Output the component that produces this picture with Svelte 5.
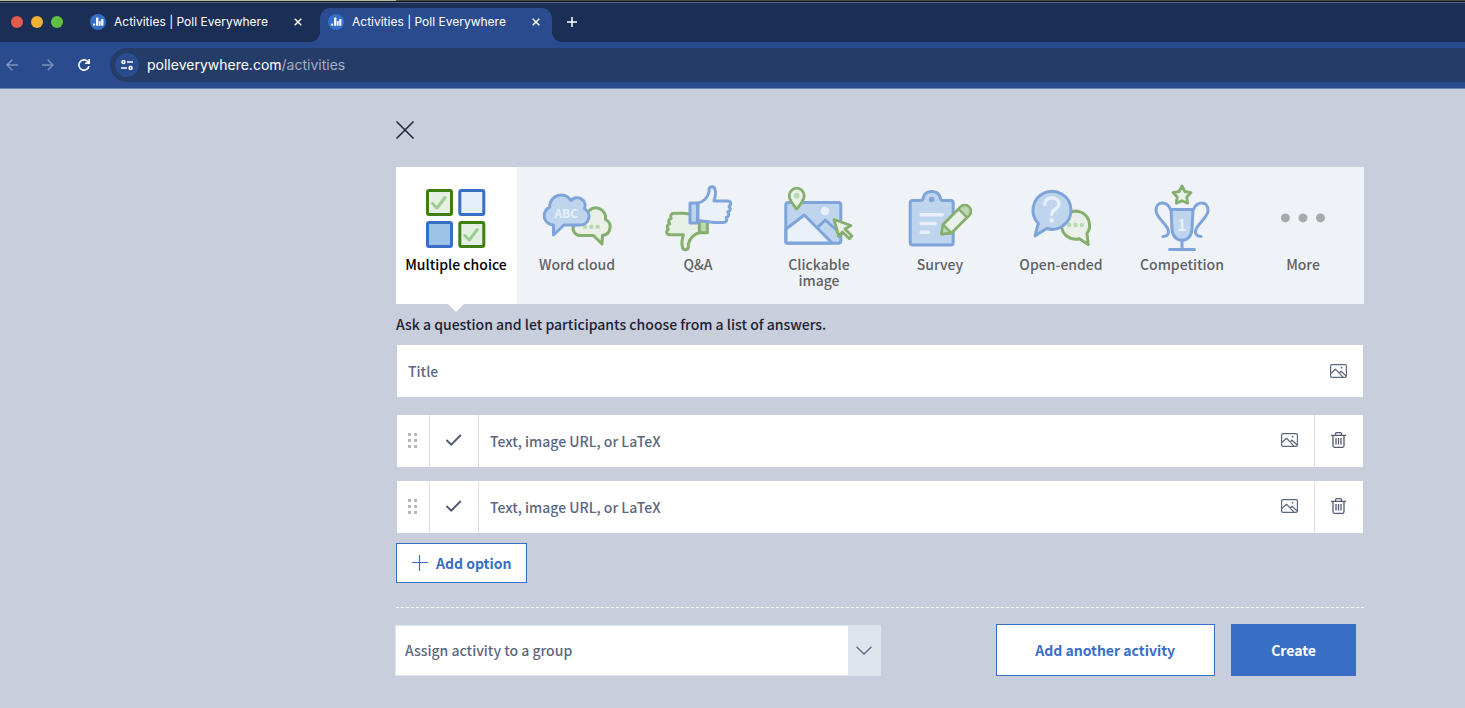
<script lang="ts">
    type Kind = { id: string; label: string };

    const kinds: Kind[] = [
        { id: "choice", label: "Multiple choice" },
        { id: "cloud", label: "Word cloud" },
        { id: "qa", label: "Q&A" },
        { id: "image", label: "Clickable image" },
        { id: "survey", label: "Survey" },
        { id: "open", label: "Open-ended" },
        { id: "competition", label: "Competition" },
        { id: "more", label: "More" },
    ];

    let selected = $state("choice");
    let title = $state("");
    let group = $state("");
    let options = $state([
        { id: 1, text: "" },
        { id: 2, text: "" },
    ]);
    let nextId = 3;

    function addOption() {
        options.push({ id: nextId++, text: "" });
    }

    function removeOption(id: number) {
        options = options.filter((o) => o.id !== id);
    }
</script>

{#snippet favicon()}
    <svg width="16" height="16" viewBox="0 0 16 16" aria-hidden="true">
        <circle cx="8" cy="8" r="8" fill="#3570c8" />
        <rect x="3" y="9.5" width="2.2" height="2.2" rx="1" fill="#fff" />
        <rect x="6" y="3.5" width="2.4" height="8.2" rx=".6" fill="#fff" />
        <rect x="9" y="7" width="1.6" height="4.7" rx=".5" fill="#fff" />
        <rect x="11.2" y="5" width="2.2" height="6.7" rx=".6" fill="#fff" />
    </svg>
{/snippet}

{#snippet smallCross()}
    <svg width="8" height="8" viewBox="0 0 8 8" aria-hidden="true">
        <path d="M.7 .7 7.3 7.3M7.3 .7 .7 7.3" stroke="#fff" stroke-width="1.5" />
    </svg>
{/snippet}

{#snippet pictureIcon()}
    <svg width="17" height="14" viewBox="0 0 17 14" fill="none" stroke="#5b6880" stroke-width="1.2" stroke-linejoin="round" aria-hidden="true">
        <rect x=".6" y=".6" width="15.8" height="12.8" rx="1.4" />
        <path d="M.8 9.5 5.5 5.2 13 13.2M9 9 11 7.2 16.2 12" />
        <circle cx="11.6" cy="3.7" r=".9" fill="#5b6880" stroke="none" />
    </svg>
{/snippet}

{#snippet kindIcon(id: string)}
    <svg class="kind-icon" width="73" height="72" viewBox="0 0 73 72" fill="none" stroke-width="3" stroke-linecap="round" stroke-linejoin="round" aria-hidden="true">
        {#if id === "choice"}
            <rect x="7.5" y="8.5" width="24" height="24" rx="1.5" fill="#e4f0e2" stroke="#3f7f12" />
            <rect x="39.8" y="8.5" width="24" height="24" rx="1.5" fill="#e5effa" stroke="#386fc4" />
            <rect x="7.5" y="40.5" width="24" height="24" rx="1.5" fill="#9dc2e7" stroke="#386fc4" />
            <rect x="39.8" y="40.5" width="24" height="24" rx="1.5" fill="#e4f0e2" stroke="#3f7f12" />
            <path d="M12.5 21.5 17 26 25 15.5M44.8 53.5 49.3 58 57.3 47.5" stroke="#9fcb95" />
        {:else if id === "cloud"}
            <path d="M46 31.5A9.8 9.8 0 0 1 64.5 37.5A8.5 8.5 0 0 1 61.5 53.5L61 62 52.5 53.5H39A7 7 0 0 1 32.5 44Z" class="g" />
            <circle cx="44" cy="44.7" r="2.2" class="gl" />
            <circle cx="50.3" cy="44.7" r="2.2" class="gl" />
            <circle cx="56.6" cy="44.7" r="2.2" class="gl" />
            <path d="M12.5 43V53L23 43H39A8.7 8.7 0 0 0 43.5 26.7A8 8 0 0 0 30 18.5A11.5 11.5 0 0 0 8.7 25.2A9.3 9.3 0 0 0 12.5 43Z" class="b" />
            <text x="25.3" y="36" font-size="12" class="glyph">ABC</text>
        {:else if id === "qa"}
            <g transform="rotate(180 36.7 35.9)">
                <path d="M36 21C40 20.5 45.5 16.5 47 10V7C47.5 3 52.5 3 53 7C54.5 11 53 15 52 19H65C69 19 70 22 67 24.5C69 26.5 68.5 29 65.7 30C67.5 32 67 34.5 64.3 35.5C65.3 38 64.5 40.5 61 40.5H52L36 38.5Z" class="g" />
                <path d="M28 21H36V41H28Z" class="g gfill" />
            </g>
            <path d="M36 21C40 20.5 45.5 16.5 47 10V7.5C47.5 3.7 52.5 3.7 53 7.5C54.5 11 53 15 52 19H65C69 19 70 22 67 24.5C69 26.5 68.5 29 65.7 30C67.5 32 67 34.5 64.3 35.5C65.3 38 64.5 40.5 61 40.5H52L36 38.5Z" class="b pale" />
            <path d="M28 21H35.5V41H28Z" class="b" />
        {:else if id === "image"}
            <rect x="2.8" y="20.5" width="55" height="40.7" rx="2.5" class="b" />
            <path d="M35.3 44.7 42.3 38 57.8 52" class="b" />
            <path d="M3 47 21.3 33 49 61H3Z" class="b pale" />
            <circle cx="42" cy="29" r="4.3" fill="#e6effa" />
            <path d="M13.7 27C9 21.5 6.2 17.5 6.2 13.7A7.5 7.5 0 0 1 21.2 13.7C21.2 17.5 18.4 21.5 13.7 27Z" class="g" stroke-width="2.8" />
            <circle cx="13.7" cy="13.7" r="3" class="gl" />
            <path d="M51 37.5 68 43.5 62 47 69 54 66.3 56.7 59.5 50 55.8 54.5Z" class="g" stroke-width="2.8" />
        {:else if id === "survey"}
            <path d="M8.7 18.5H17C19.5 18.5 18.8 16.5 19.5 14.8C22 7.8 33.5 7.8 36 14.8C36.7 16.5 36 18.5 38.5 18.5H46.7Q49.2 18.5 49.2 21V60.5Q49.2 63 46.7 63H8.7Q6.2 63 6.2 60.5V21Q6.2 18.5 8.7 18.5Z" class="b" />
            <circle cx="27.7" cy="17.5" r="2.8" fill="#7fa4da" />
            <path d="M17.2 32.7H38.3M17.2 41.5H31.2M17.2 50.3H24.5" stroke="#e6effa" stroke-width="3.6" />
            <path d="M37.5 52 39 42.5 56.5 25A6 6 0 0 1 65 33.5L47.5 51Z" class="g" stroke-width="2.8" />
            <path d="M54.5 27 56.5 25A6 6 0 0 1 65 33.5L63 35.5Z" class="g gfill" stroke-width="2.4" />
            <path d="M37.5 52 39 42.5 47.5 51Z" class="g gfill" stroke-width="2.4" />
        {:else if id === "open"}
            <path d="M62 51.3 63.2 62.5 54.3 56.7A14 14 0 1 1 62 51.3Z" class="g" />
            <circle cx="44.3" cy="43" r="2.2" class="gl" />
            <circle cx="50.6" cy="43" r="2.2" class="gl" />
            <circle cx="56.8" cy="43" r="2.2" class="gl" />
            <path d="M13.3 41.5 10 54 21.5 46.5A19 19 0 1 0 13.3 41.5Z" class="b" />
            <path d="M19.7 22.5C19.7 14 34 14 34 22C34 27.5 26.7 27 26.7 32.5" stroke="#e6effa" stroke-width="3.4" />
            <circle cx="26.7" cy="38.4" r="2.4" fill="#e6effa" />
        {:else if id === "competition"}
            <path d="M36 4 38.9 9.5 45 10.6 40.8 15 41.6 21.2 36 18.7 30.4 21.2 31.2 15 27 10.6 33.1 9.5Z" class="g" stroke-width="2.8" />
            <path d="M24.5 27.5C21 19 10 18.5 10 28.5C10 36 22.5 43 22.5 49.5C22.5 53.5 20 54.5 17 54.5M47.5 27.5C51 19 62 18.5 62 28.5C62 36 49.5 43 49.5 49.5C49.5 53.5 52 54.5 55 54.5M36 59V67.5M23.5 67.5H48.5" stroke="#7fa4da" />
            <path d="M25 27.5H47L46 47C45.5 62 26.5 62 26 47Z" class="b" />
            <text x="35.8" y="49" font-size="16" class="glyph">1</text>
        {:else}
            <circle cx="18.4" cy="35.9" r="4.5" fill="#a7a9ac" />
            <circle cx="36" cy="35.9" r="4.5" fill="#a7a9ac" />
            <circle cx="53.5" cy="35.9" r="4.5" fill="#a7a9ac" />
        {/if}
    </svg>
{/snippet}

<header class="browser">
    <div class="desktop-edge"></div>
    <div class="tab-strip">
        <div class="lights">
            <i class="red"></i>
            <i class="yellow"></i>
            <i class="green"></i>
        </div>
        <div class="tab">
            {@render favicon()}
            <span>Activities | Poll Everywhere</span>
            <button aria-label="Close tab">{@render smallCross()}</button>
        </div>
        <div class="tab current">
            {@render favicon()}
            <span>Activities | Poll Everywhere</span>
            <button aria-label="Close tab">{@render smallCross()}</button>
        </div>
        <button class="new-tab" aria-label="New tab">
            <svg width="10" height="10" viewBox="0 0 10 10">
                <path d="M5 0V10M0 5H10" stroke="#fff" stroke-width="1.5" />
            </svg>
        </button>
    </div>
    <div class="toolbar">
        <button aria-label="Back">
            <svg width="12" height="12" viewBox="0 0 12 12" fill="none" stroke="#7d90bd" stroke-width="1.5">
                <path d="M12 6H1M6.3 .7 1 6 6.3 11.3" />
            </svg>
        </button>
        <button aria-label="Forward">
            <svg width="12" height="12" viewBox="0 0 12 12" fill="none" stroke="#7d90bd" stroke-width="1.5">
                <path d="M0 6H11M5.7 .7 11 6 5.7 11.3" />
            </svg>
        </button>
        <button aria-label="Reload">
            <svg width="12" height="12" viewBox="0 0 12 12" fill="none" stroke="#fff" stroke-width="1.6">
                <path d="M11 7A5.1 5.1 0 1 1 9.8 2.6L11 3.8M11.2 0V4.2H7" />
            </svg>
        </button>
        <div class="address">
            <button class="site-info" aria-label="Site information">
                <svg width="12" height="10" viewBox="0 0 12 10" fill="none" stroke="#fff" stroke-width="1.4">
                    <circle cx="2.4" cy="2" r="1.5" />
                    <path d="M6 2H12M0 8H6" />
                    <circle cx="9.6" cy="8" r="1.5" />
                </svg>
            </button>
            <a href="#activities">polleverywhere.com<span>/activities</span></a>
        </div>
    </div>
</header>

<main>
    <button class="close" aria-label="Close">
        <svg width="18" height="18" viewBox="0 0 18 18">
            <path d="M.5 .5 17.5 17.5M17.5 .5 .5 17.5" stroke="#1c2333" stroke-width="1.5" />
        </svg>
    </button>

    <nav class="kinds">
        {#each kinds as kind (kind.id)}
            <button
                class="kind"
                class:active={selected === kind.id}
                onclick={() => (selected = kind.id)}
            >
                {@render kindIcon(kind.id)}
                <span>{kind.label}</span>
            </button>
        {/each}
    </nav>

    <p class="hint">Ask a question and let participants choose from a list of answers.</p>

    <div class="row title-row">
        <input aria-label="Title" placeholder="Title" bind:value={title} />
        <button class="picture" aria-label="Add image to title">{@render pictureIcon()}</button>
    </div>

    <div class="options">
        {#each options as option (option.id)}
            <div class="row">
                <button class="drag" aria-label="Reorder option">
                    <svg width="10" height="15" viewBox="0 0 10 15" fill="#b4b7bf">
                        <path d="M0 0h3v3H0zM6 0h3v3H6zM0 6h3v3H0zM6 6h3v3H6zM0 12h3v3H0zM6 12h3v3H6z" />
                    </svg>
                </button>
                <button class="cell mark" aria-label="Mark as correct">
                    <svg width="16" height="12" viewBox="0 0 16 12" fill="none" stroke="#4f5b73" stroke-width="2">
                        <path d="M.4 6 5.2 10.6 14.8 1" />
                    </svg>
                </button>
                <input aria-label="Option" placeholder="Text, image URL, or LaTeX" bind:value={option.text} />
                <button class="picture" aria-label="Add image to option">{@render pictureIcon()}</button>
                <button class="cell" aria-label="Delete option" onclick={() => removeOption(option.id)}>
                    <svg width="16" height="16" viewBox="0 0 16 16" fill="none" stroke="#4f5b73" stroke-width="1.3">
                        <path d="M0 3.3H15M4.6 3V1.6Q4.6 .7 5.5 .7H9.5Q10.4 .7 10.4 1.6V3M2 3.5V13.8Q2 15.3 3.5 15.3H11.5Q13 15.3 13 13.8V3.5M5 6V12.5M7.5 6V12.5M10 6V12.5" />
                    </svg>
                </button>
            </div>
        {/each}
    </div>

    <button class="add-option" onclick={addOption}>
        <svg width="16" height="16" viewBox="0 0 16 16">
            <path d="M7.5 0V16M0 7.5H16" stroke="#386fc4" stroke-width="1.2" />
        </svg>
        Add option
    </button>

    <footer>
        <div class="group">
            <select aria-label="Assign activity to a group" bind:value={group}>
                <option value="">Assign activity to a group</option>
            </select>
            <span class="arrow">
                <svg width="17" height="9" viewBox="0 0 17 9" fill="none" stroke="#5b6880" stroke-width="1.3">
                    <path d="M.5 .7 8 8 15.5 .7" />
                </svg>
            </span>
        </div>
        <button class="another">Add another activity</button>
        <button class="create">Create</button>
    </footer>
</main>

<style>
    :global(body) {
        margin: 0;
        background: #c8cedc;
    }

    button {
        display: flex;
        align-items: center;
        justify-content: center;
        padding: 0;
        border: 0;
        background: none;
        color: inherit;
        font: inherit;
        cursor: pointer;
    }

    svg {
        display: block;
        flex: none;
    }

    .browser {
        font-family: Inter, Roboto, sans-serif;
        color: #fff;
        border-bottom: 1px solid #6d86b8;
    }

    .desktop-edge {
        height: 1px;
        background: linear-gradient(90deg, #b9b9a8 27%, #4c4a45 27%);
        border-bottom: 1px solid #10151f;
    }

    .tab-strip {
        display: flex;
        height: 39px;
        background: #1b2e56;
        border-top: 1px solid #54657f;
    }

    .lights {
        display: flex;
        align-items: center;
        gap: 8px;
        padding: 0 17px 2px 11px;
    }

    .lights i {
        width: 12px;
        height: 12px;
        border-radius: 50%;
    }

    .red {
        background: #e25a50;
    }

    .yellow {
        background: #eeb236;
    }

    .green {
        background: #62c041;
    }

    .tab {
        position: relative;
        display: flex;
        align-items: center;
        box-sizing: border-box;
        width: 240px;
        padding: 0 16px 2px 10px;
        font-size: 12px;
    }

    .tab span {
        flex: 1;
        padding-left: 8px;
        white-space: nowrap;
    }

    .tab button {
        width: 12px;
        height: 16px;
    }

    .tab.current {
        width: 232px;
        margin-top: 5px;
        padding: 0 10px 7px 8px;
        border-radius: 10px 10px 0 0;
        background: #2a4b8e;
    }

    /* curved feet that join the current tab to the toolbar */
    .tab.current::before,
    .tab.current::after {
        content: "";
        position: absolute;
        bottom: 0;
        width: 10px;
        height: 10px;
    }

    .tab.current::before {
        right: 100%;
        background: radial-gradient(circle at 0 0, transparent 10px, #2a4b8e 10px);
    }

    .tab.current::after {
        left: 100%;
        background: radial-gradient(circle at 100% 0, transparent 10px, #2a4b8e 10px);
    }

    .new-tab {
        width: 40px;
        padding-bottom: 2px;
    }

    .toolbar {
        display: flex;
        align-items: center;
        height: 46px;
        background: #2a4b8e;
    }

    .toolbar > button {
        width: 24px;
        height: 24px;
        margin-right: 12px;
    }

    .toolbar > .address {
        margin-left: 2px;
    }

    .address {
        display: flex;
        flex: 1;
        align-items: center;
        gap: 8px;
        height: 34px;
        padding-left: 5px;
        border-radius: 17px 0 0 17px;
        background: #253c68;
    }

    .site-info {
        width: 24px;
        height: 24px;
        border-radius: 50%;
        background: #2a4b8e;
    }

    .address a {
        padding-bottom: 1px;
        color: #fff;
        font-size: 14px;
        text-decoration: none;
    }

    .address a span {
        color: #a1aec8;
    }

    main {
        padding: 32px 101px 32px 396px;
        font-family: "Noto Sans CJK SC", "Noto Sans", sans-serif;
        font-size: 14px;
        font-weight: 500;
        line-height: 20px;
        color: #1c2333;
    }

    .close {
        width: 18px;
        height: 18px;
    }

    .kinds {
        display: flex;
        margin-top: 28px;
        background: #eff3f8;
    }

    .kind {
        position: relative;
        flex: 1;
        flex-direction: column;
        justify-content: flex-start;
        gap: 2px;
        min-height: 137px;
        padding: 15px 1px 14px 0;
        line-height: 16px;
        color: #5f6166;
    }

    .kind span {
        max-width: 108px;
    }

    .kind:nth-child(4) span {
        max-width: 80px;
    }

    .kind.active {
        background: #fff;
        color: #000;
    }

    .kind.active::after {
        content: "";
        position: absolute;
        top: 100%;
        left: 50%;
        margin-left: -9px;
        border: 8px solid transparent;
        border-top-color: #fff;
        border-bottom: 0;
    }

    .kind-icon .b {
        fill: #bed5ed;
        stroke: #7fa4da;
    }

    .kind-icon .pale {
        fill: #ebf1f9;
    }

    .kind-icon .g {
        fill: #e8f0e8;
        stroke: #86ae6f;
    }

    .kind-icon .gl,
    .kind-icon .gfill {
        fill: #b9d9b4;
    }

    .kind-icon .glyph {
        fill: #e6effa;
        font-weight: 700;
        text-anchor: middle;
    }

    .hint {
        margin: 10px 0 11px;
    }

    .row {
        display: flex;
        align-items: stretch;
        height: 52px;
        margin: 0 1px;
        background: #fff;
    }

    .title-row {
        margin-bottom: 18px;
    }

    input {
        flex: 1;
        min-width: 0;
        padding: 0 11px;
        border: 0;
        background: none;
        color: #1c2333;
        font: inherit;
    }

    input::placeholder {
        color: #5b6880;
        opacity: 1;
    }

    .picture {
        width: 49px;
    }

    .options {
        display: flex;
        flex-direction: column;
        gap: 14px;
    }

    .options button {
        padding-bottom: 2px;
    }

    .drag {
        width: 32px;
    }

    .cell {
        width: 49px;
        border-left: 1px solid #dfe1e6;
    }

    .mark {
        width: 50px;
        border-right: 1px solid #dfe1e6;
    }

    .add-option {
        gap: 8px;
        height: 40px;
        margin: 10px 0 24px;
        padding: 0 15px;
        border: 1px solid #386fc4;
        background: #fff;
        color: #386fc4;
        font-weight: 700;
    }

    footer {
        display: flex;
        align-items: center;
        padding: 16px 8px 0 0;
        border-top: 1px dashed #fff;
    }

    .group {
        position: relative;
        display: flex;
        width: 486px;
        margin: 0 auto 0 -1px;
    }

    select {
        width: 100%;
        height: 51px;
        padding: 0 40px 0 9px;
        border: 1px solid #dfe3ec;
        border-radius: 0;
        appearance: none;
        background: #fff;
        color: #5b6880;
        font: inherit;
    }

    .arrow {
        position: absolute;
        top: 0;
        right: 0;
        bottom: 0;
        display: flex;
        align-items: center;
        justify-content: center;
        width: 33px;
        background: #dfe3ec;
        pointer-events: none;
    }

    .another,
    .create {
        height: 52px;
        border: 1px solid #386fc4;
        font-weight: 700;
    }

    .another {
        padding: 0 39px 0 38px;
        margin-right: 16px;
        background: #fff;
        color: #386fc4;
    }

    .create {
        padding: 0 39px;
        background: #386fc4;
        color: #fff;
    }
</style>
